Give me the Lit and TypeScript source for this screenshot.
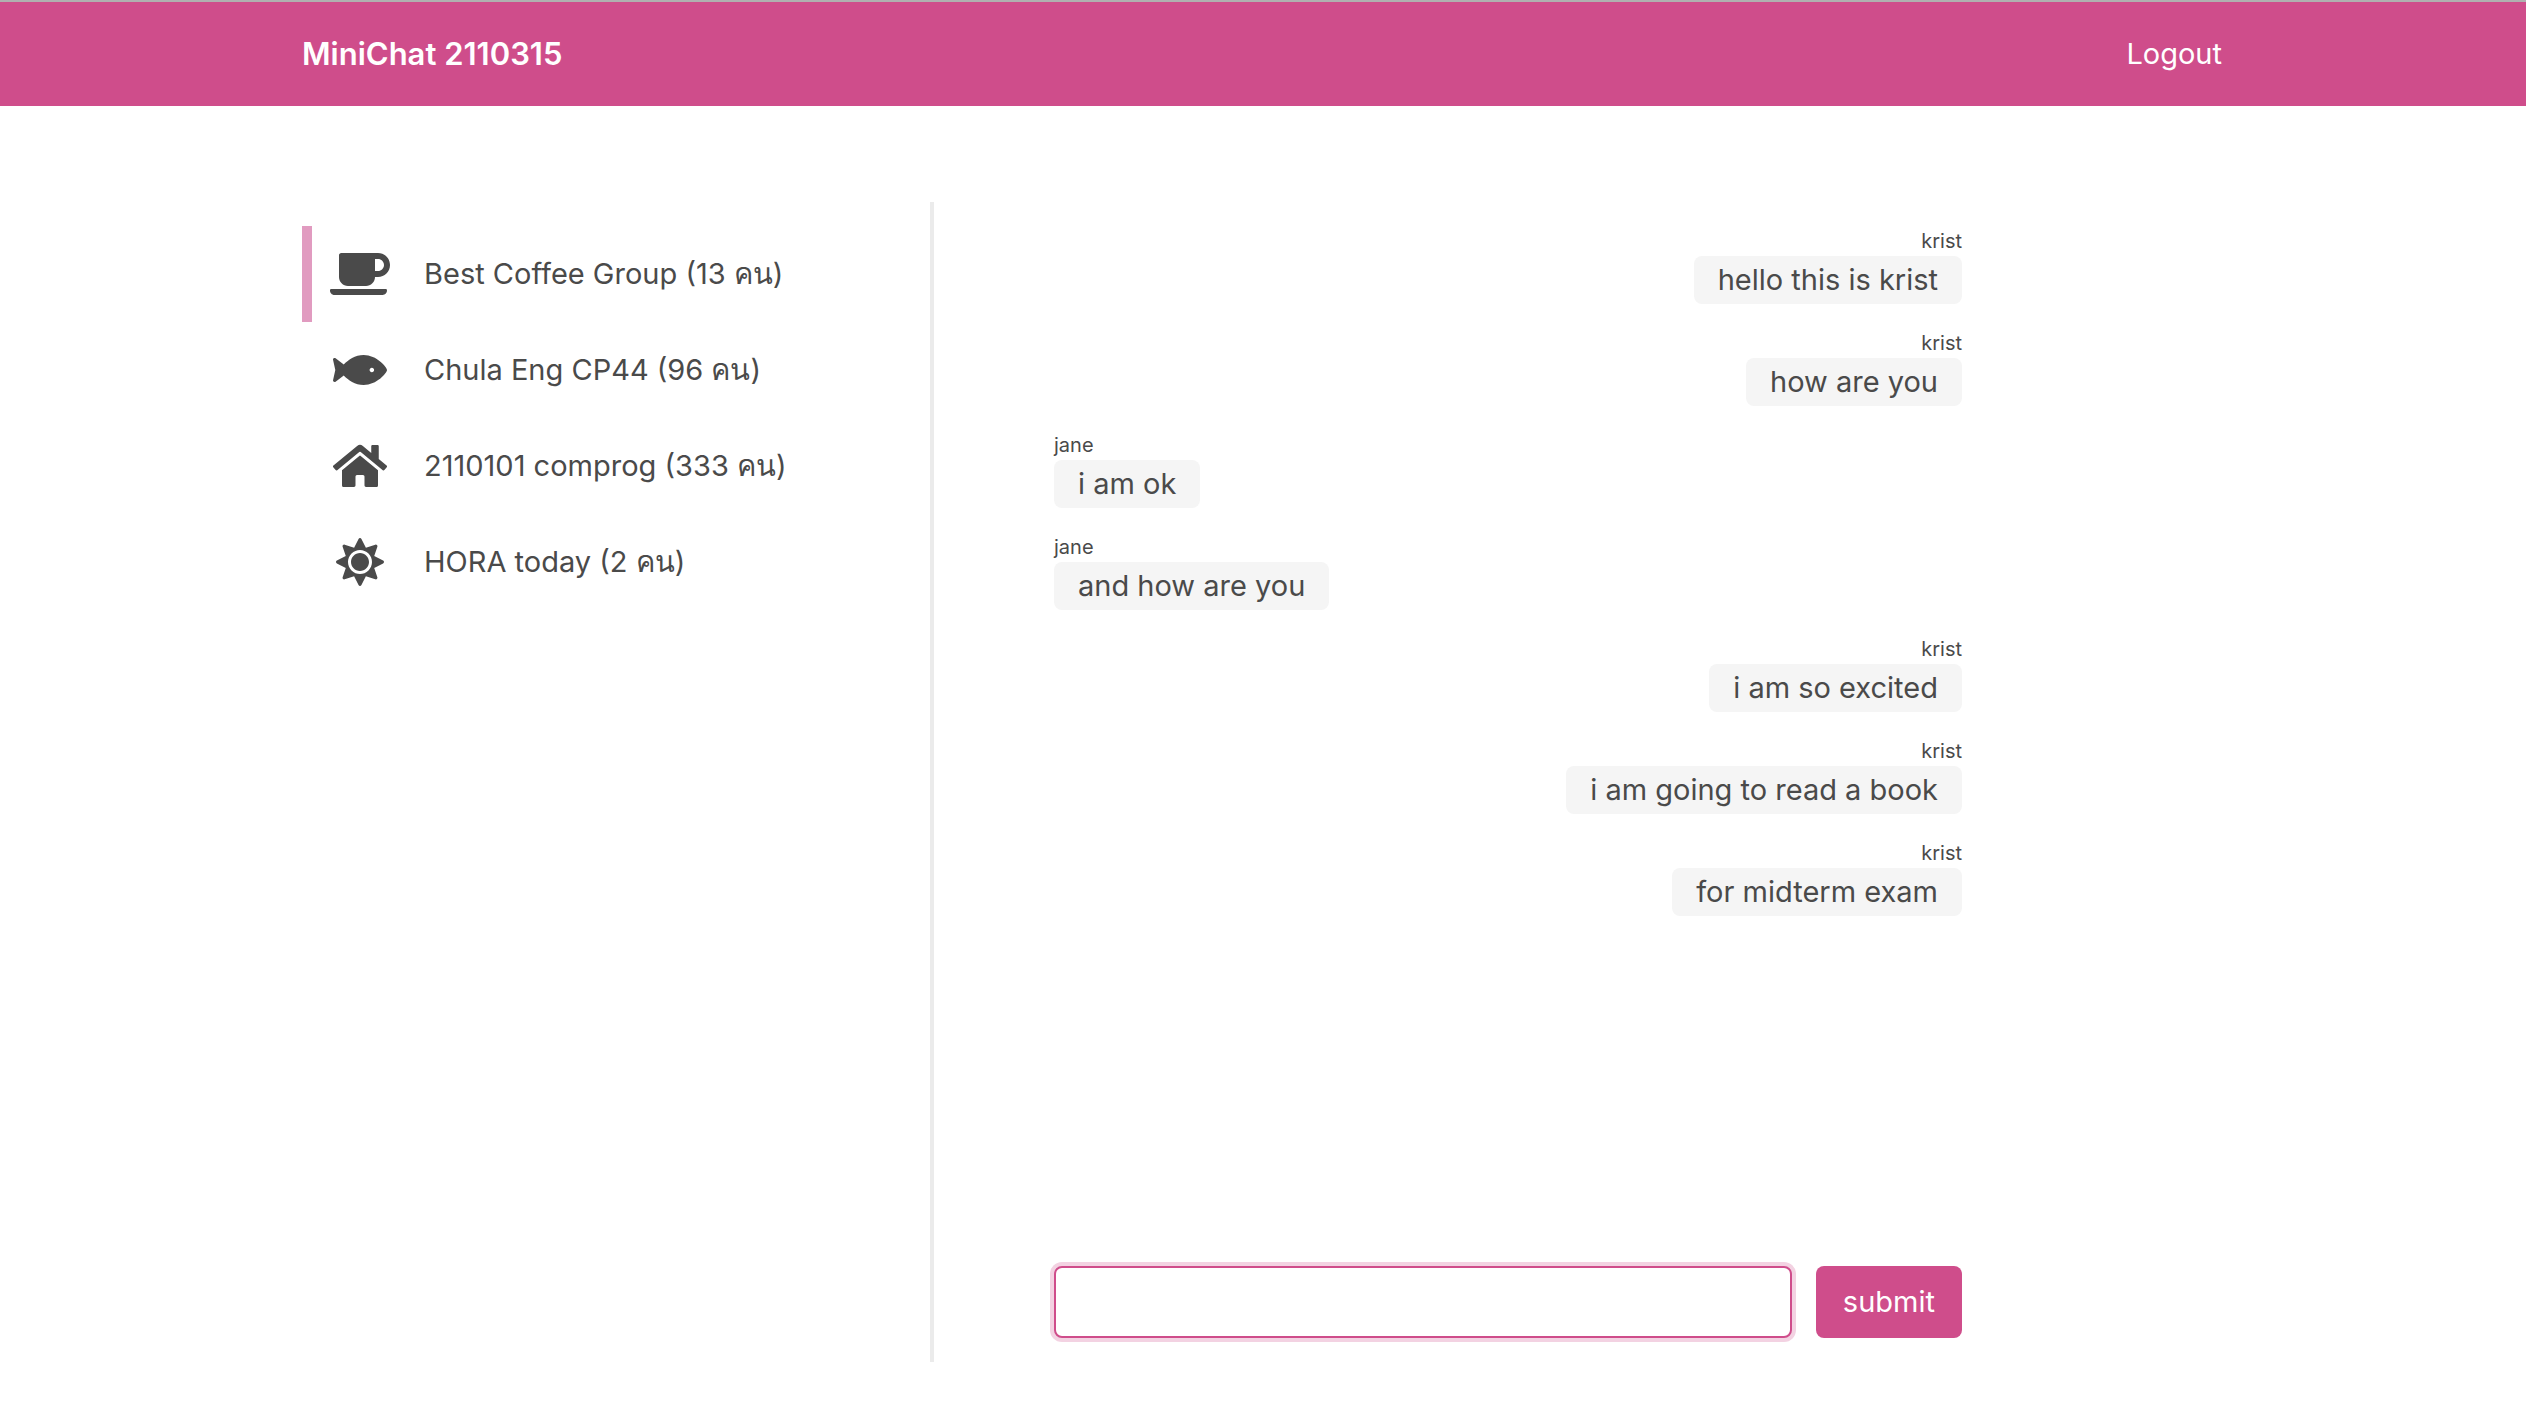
import { LitElement, html, svg, css } from "lit";
import { customElement, state } from "lit/decorators.js";

interface Room {
  name: string;
  members: number;
  icon: string;
  width: number;
}

interface Message {
  author: string;
  text: string;
}

const ROOMS: Room[] = [
  {
    name: "Best Coffee Group",
    members: 13,
    width: 640,
    icon: "M192 384h192c53 0 96-43 96-96h32c70.6 0 128-57.4 128-128S582.6 32 512 32H120c-13.3 0-24 10.7-24 24v232c0 53 43 96 96 96zM512 96c35.3 0 64 28.7 64 64s-28.7 64-64 64h-32V96h32zm47.7 384H48.3c-47.6 0-61-64-36-64h583.3c25 0 11.8 64-35.9 64z",
  },
  {
    name: "Chula Eng CP44",
    members: 96,
    width: 576,
    icon: "M327.1 96c-89.97 0-168.54 54.77-212.27 101.63L27.5 131.58c-12.13-9.18-30.24.6-27.14 14.66L24.54 256 .35 365.77c-3.1 14.06 15.01 23.83 27.14 14.66l87.33-66.05C158.55 361.23 237.13 416 327.1 416 464.56 416 576 288 576 256S464.56 96 327.1 96zm87.43 184c-13.25 0-24-10.75-24-24 0-13.26 10.75-24 24-24 13.26 0 24 10.74 24 24 0 13.25-10.75 24-24 24z",
  },
  {
    name: "2110101 comprog",
    members: 333,
    width: 576,
    icon: "M280.37 148.26L96 300.11V464a16 16 0 0 0 16 16l112.06-.29a16 16 0 0 0 15.92-16V368a16 16 0 0 1 16-16h64a16 16 0 0 1 16 16v95.64a16 16 0 0 0 16 16.05L464 480a16 16 0 0 0 16-16V300L295.67 148.26a12.19 12.19 0 0 0-15.3 0zM571.6 251.47L488 182.56V44.05a12 12 0 0 0-12-12h-56a12 12 0 0 0-12 12v72.61L318.47 43a48 48 0 0 0-61 0L4.34 251.47a12 12 0 0 0-1.6 16.9l25.5 31A12 12 0 0 0 45.15 301l235.22-193.74a12.19 12.19 0 0 1 15.3 0L530.9 301a12 12 0 0 0 16.9-1.6l25.5-31a12 12 0 0 0-1.7-16.93z",
  },
  {
    name: "HORA today",
    members: 2,
    width: 512,
    icon: "M256 160c-52.9 0-96 43.1-96 96s43.1 96 96 96 96-43.1 96-96-43.1-96-96-96zm246.4 80.5l-94.7-47.3 33.5-100.4c4.5-13.6-8.4-26.5-21.9-21.9l-100.4 33.5-47.4-94.8c-6.4-12.8-24.6-12.8-31 0l-47.3 94.7L92.7 70.8c-13.6-4.5-26.5 8.4-21.9 21.9l33.5 100.4-94.7 47.4c-12.8 6.4-12.8 24.6 0 31l94.7 47.3-33.5 100.5c-4.5 13.6 8.4 26.5 21.9 21.9l100.4-33.5 47.3 94.7c6.4 12.8 24.6 12.8 31 0l47.3-94.7 100.4 33.5c13.6 4.5 26.5-8.4 21.9-21.9l-33.5-100.4 94.7-47.3c13-6.5 13-24.7.2-31.1zm-155.9 106c-49.9 49.9-131.1 49.9-181 0-49.9-49.9-49.9-131.1 0-181 49.9-49.9 131.1-49.9 181 0 49.9 49.9 49.9 131.1 0 181z",
  },
];

@customElement("app-root")
export class AppRoot extends LitElement {
  static styles = css`
    :host {
      display: flex;
      flex-direction: column;
      box-sizing: border-box;
      min-height: 100vh;
      border-top: 2px solid #b0b0b0;
      background: #fff;
      color: #4a4a4a;
      font-family: Inter, "Noto Sans", "Liberation Sans", sans-serif;
      font-size: 29px;
      line-height: 48px;
    }
    *, *::before, *::after { box-sizing: border-box; }
    .container {
      width: 100%;
      max-width: 1922px;
      margin: 0 auto;
      padding-right: 2px;
    }
    .navbar { background: #cf4d8b; color: #fff; }
    .navbar .container {
      display: flex;
      align-items: center;
      justify-content: space-between;
      min-height: 104px;
    }
    .navbar a { color: inherit; text-decoration: none; }
    .navbar .brand { font-size: 31px; font-weight: 600; }
    main {
      flex: 1;
      display: flex;
      padding: 96px 0 54px;
    }
    main .container {
      display: grid;
      grid-template-columns: minmax(0, 632fr) minmax(0, 1288fr);
    }
    .rooms { padding: 24px 0; border-right: 4px solid #ebebeb; }
    .room {
      display: flex;
      align-items: center;
      gap: 16px;
      width: 100%;
      height: 96px;
      padding: 0;
      border: 0;
      border-left: 10px solid transparent;
      background: none;
      color: inherit;
      font: inherit;
      text-align: left;
    }
    .room.active { border-left-color: #e19bc0; }
    .icon { flex: none; display: flex; justify-content: center; width: 96px; }
    .icon svg { height: 48px; fill: currentColor; }
    .chat {
      display: flex;
      flex-direction: column;
      justify-content: space-between;
      width: 100%;
      max-width: 1028px;
      padding: 24px 0 24px 120px;
    }
    .messages {
      display: flex;
      flex-direction: column;
      gap: 24px;
      margin: 0;
      padding: 0;
      list-style: none;
    }
    .message { display: flex; flex-direction: column; align-items: flex-start; }
    .message.own { align-items: flex-end; }
    .author { font-size: 20px; line-height: 30px; }
    .bubble { padding: 0 24px; border-radius: 8px; background: #f5f5f5; }
    .compose { display: flex; gap: 24px; }
    .field {
      flex: 1;
      min-width: 0;
      height: 72px;
      padding: 0 24px;
      border: 2px solid #cf4d8b;
      border-radius: 8px;
      outline: none;
      box-shadow: 0 0 0 4px #f3d2e2;
      background: #fff;
      color: inherit;
      font: inherit;
    }
    .submit {
      height: 72px;
      padding: 0 27px;
      border: 0;
      border-radius: 8px;
      background: #cf4d8b;
      color: #fff;
      font: inherit;
    }
  `;

  @state() private room = 0;
  @state() private messages: Message[] = [
    { author: "krist", text: "hello this is krist" },
    { author: "krist", text: "how are you" },
    { author: "jane", text: "i am ok" },
    { author: "jane", text: "and how are you" },
    { author: "krist", text: "i am so excited" },
    { author: "krist", text: "i am going to read a book" },
    { author: "krist", text: "for midterm exam" },
  ];

  private send(e: Event) {
    e.preventDefault();
    const input = this.renderRoot.querySelector<HTMLInputElement>(".field")!;
    if (!input.value.trim()) return;
    this.messages = [...this.messages, { author: "krist", text: input.value }];
    input.value = "";
  }

  render() {
    return html`
      <header class="navbar">
        <nav class="container">
          <a class="brand" href="#home">MiniChat 2110315</a>
          <a href="#logout">Logout</a>
        </nav>
      </header>
      <main>
        <div class="container">
          <div class="rooms">
            ${ROOMS.map(
              (r, i) => html`
                <button class="room ${i === this.room ? "active" : ""}" type="button" @click=${() => (this.room = i)}>
                  <span class="icon">
                    <svg viewBox="0 0 ${r.width} 512" aria-hidden="true">${svg`<path d=${r.icon} />`}</svg>
                  </span>
                  <span>${r.name} (${r.members} คน)</span>
                </button>
              `
            )}
          </div>
          <section class="chat">
            <ul class="messages">
              ${this.messages.map(
                (m) => html`
                  <li class="message ${m.author === "krist" ? "own" : ""}">
                    <span class="author">${m.author}</span>
                    <span class="bubble">${m.text}</span>
                  </li>
                `
              )}
            </ul>
            <form class="compose" @submit=${this.send}>
              <input class="field" type="text" aria-label="Message" autocomplete="off" />
              <button class="submit" type="submit">submit</button>
            </form>
          </section>
        </div>
      </main>
    `;
  }
}
